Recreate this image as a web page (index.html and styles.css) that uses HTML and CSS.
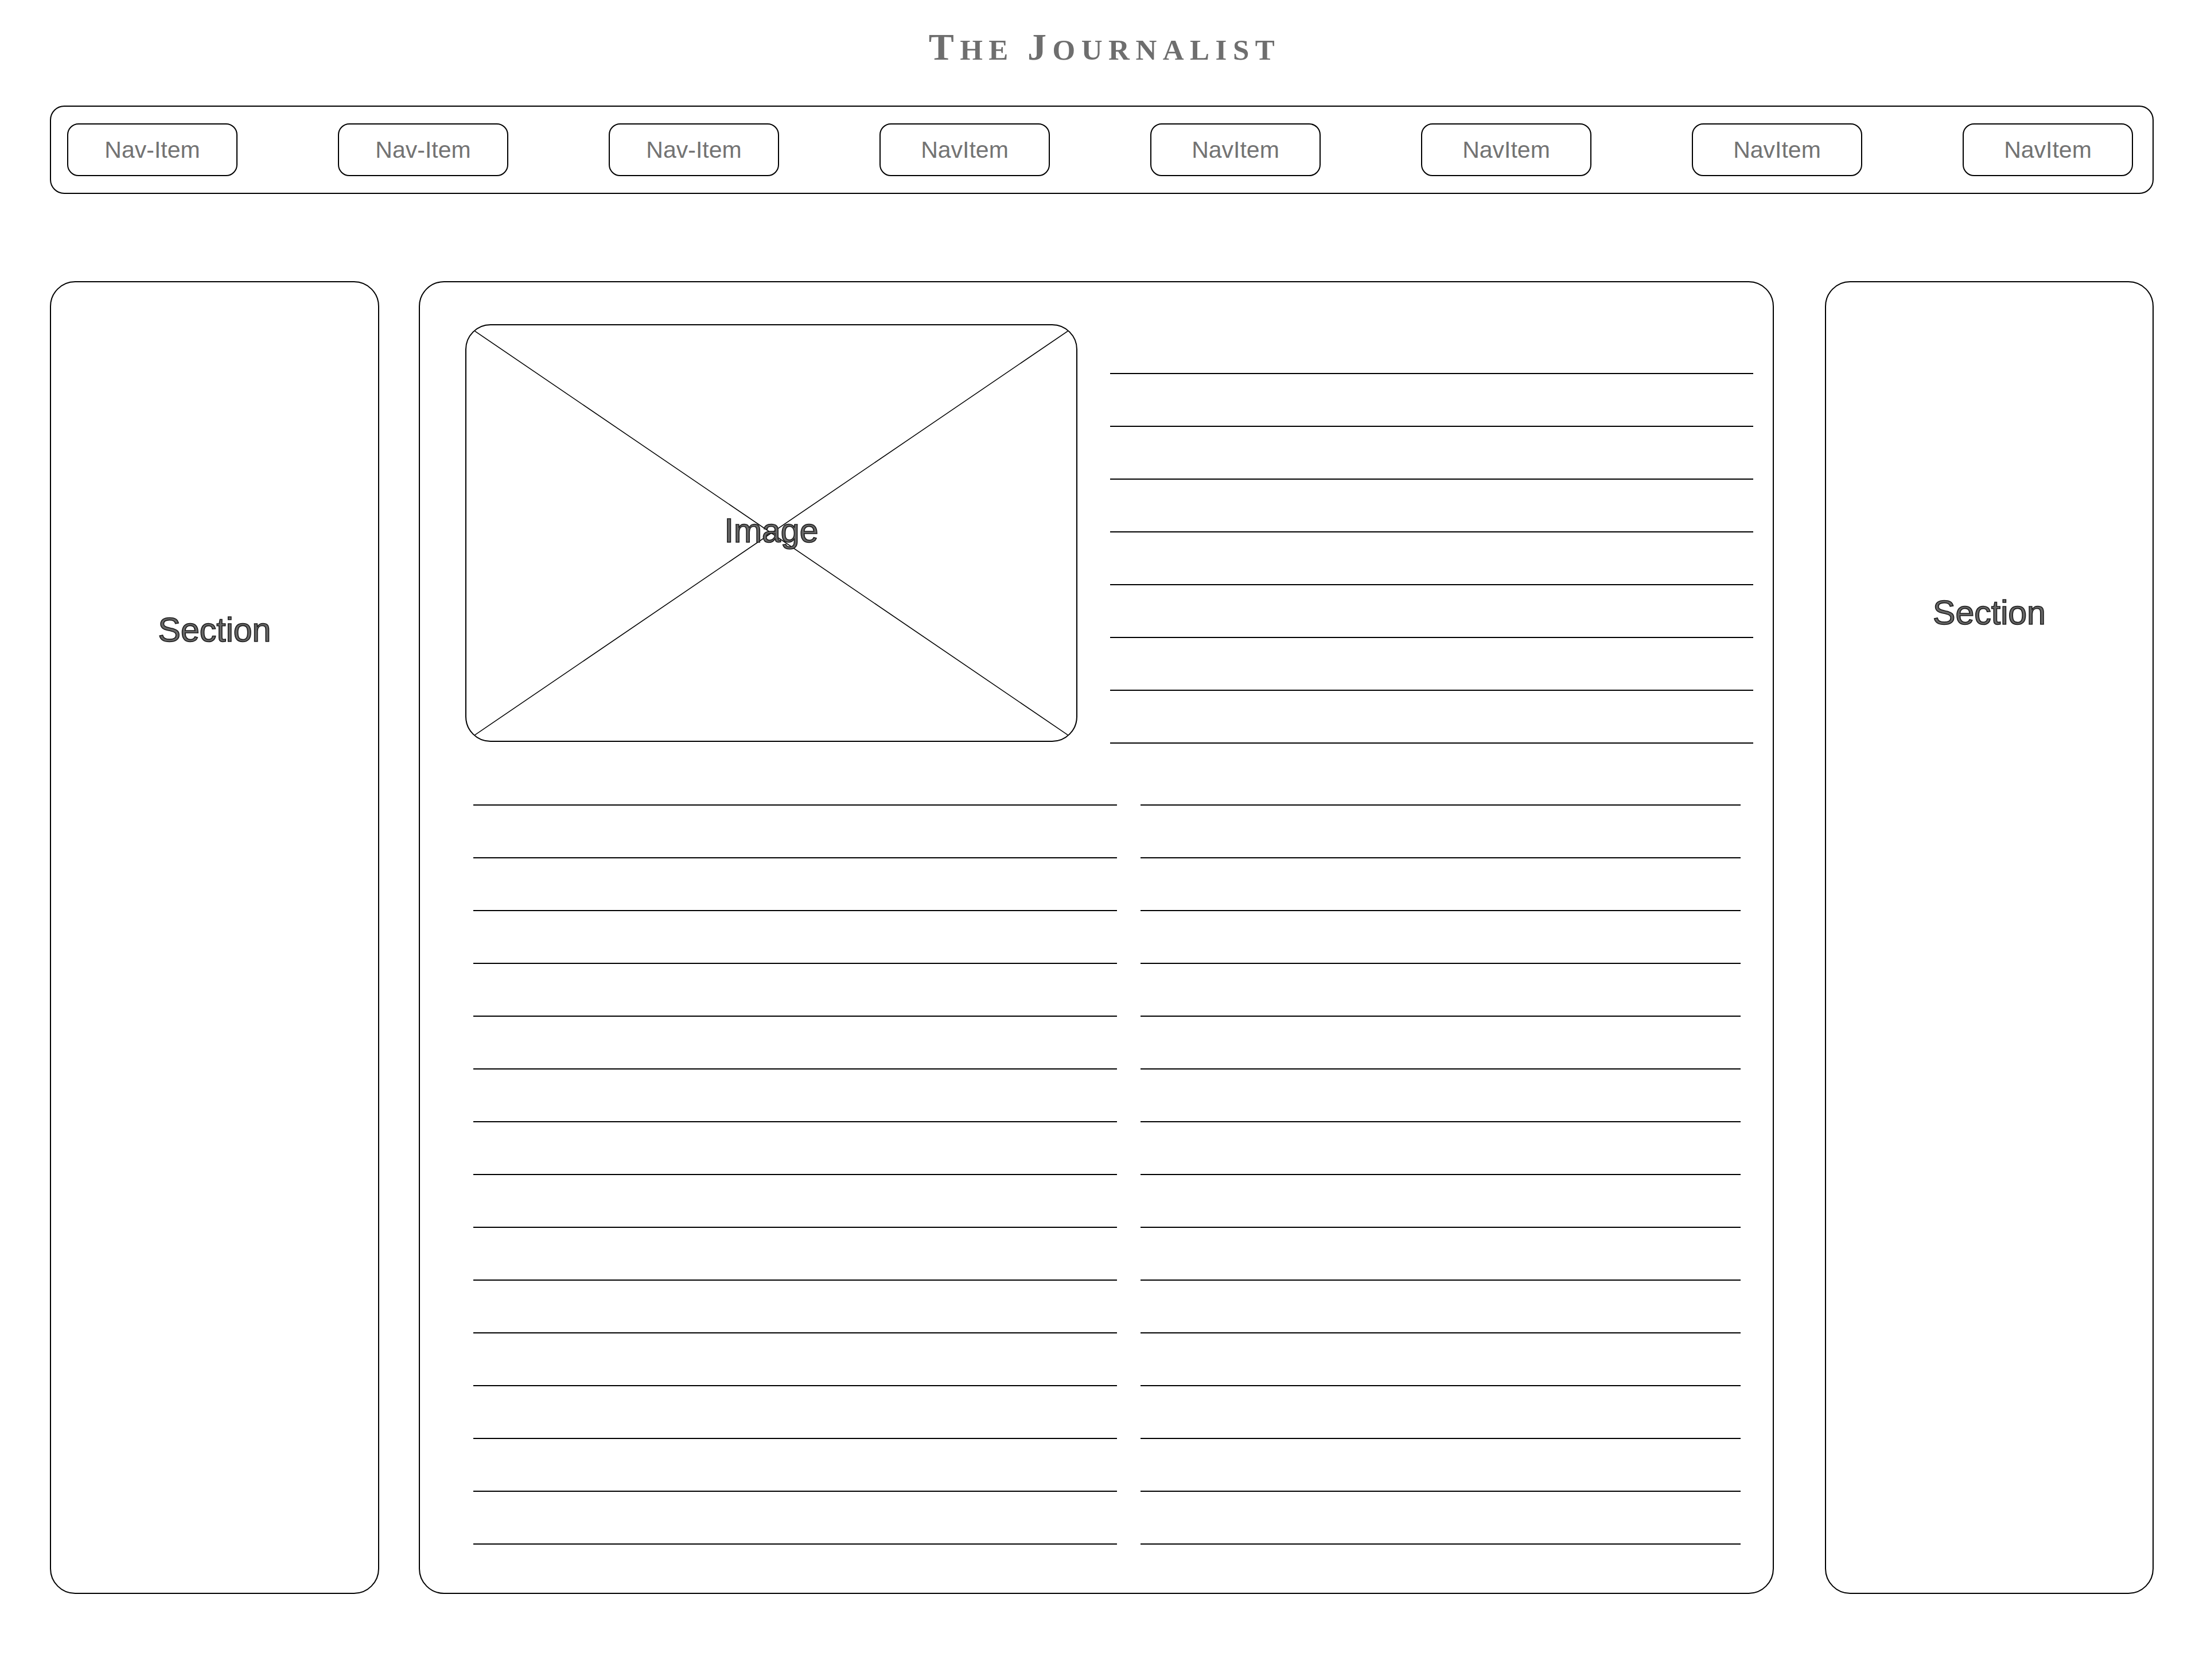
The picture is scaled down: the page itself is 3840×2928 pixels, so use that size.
FILE: index.html
```html
<!DOCTYPE html>
<html lang="en">
<head>
<meta charset="utf-8">
<title>The Journalist – wireframe</title>
<link rel="stylesheet" href="styles.css">
</head>
<body>
<div class="page">
  <h1 class="title"><span class="big">T</span>he <span class="big">J</span>ournalist</h1>

  <nav class="nav">
    <a class="nav-item">Nav-Item</a>
    <a class="nav-item">Nav-Item</a>
    <a class="nav-item">Nav-Item</a>
    <a class="nav-item">NavItem</a>
    <a class="nav-item">NavItem</a>
    <a class="nav-item">NavItem</a>
    <a class="nav-item">NavItem</a>
    <a class="nav-item">NavItem</a>
  </nav>

  <main class="main">
    <aside class="section section-left"><span class="label">Section</span></aside>

    <article class="content">
      <div class="top-row">
        <div class="image">
          <svg class="cross" viewBox="0 0 100 100" preserveAspectRatio="none" aria-hidden="true">
            <line x1="0" y1="0" x2="100" y2="100" vector-effect="non-scaling-stroke"/>
            <line x1="100" y1="0" x2="0" y2="100" vector-effect="non-scaling-stroke"/>
          </svg>
          <span class="label image-label">Image</span>
        </div>
        <div class="lines lines-top">
          <span class="line"></span><span class="line"></span><span class="line"></span><span class="line"></span>
          <span class="line"></span><span class="line"></span><span class="line"></span><span class="line"></span>
        </div>
      </div>

      <div class="columns">
        <div class="lines col-left">
          <span class="line"></span><span class="line"></span><span class="line"></span><span class="line"></span><span class="line"></span>
          <span class="line"></span><span class="line"></span><span class="line"></span><span class="line"></span><span class="line"></span>
          <span class="line"></span><span class="line"></span><span class="line"></span><span class="line"></span><span class="line"></span>
        </div>
        <div class="lines col-right">
          <span class="line"></span><span class="line"></span><span class="line"></span><span class="line"></span><span class="line"></span>
          <span class="line"></span><span class="line"></span><span class="line"></span><span class="line"></span><span class="line"></span>
          <span class="line"></span><span class="line"></span><span class="line"></span><span class="line"></span><span class="line"></span>
        </div>
      </div>
    </article>

    <aside class="section section-right"><span class="label">Section</span></aside>
  </main>
</div>
</body>
</html>
```

FILE: styles.css
```css
* {
  box-sizing: border-box;
}

html, body {
  margin: 0;
  padding: 0;
  background: #ffffff;
}

body {
  width: 3840px;
  min-height: 2928px;
  font-family: "Liberation Sans", Arial, sans-serif;
}

.page {
  padding: 0 86px 0 87px;
}

/* ---------- Title ---------- */
.title {
  margin: 50px 0 0;
  text-align: center;
  font-family: "Liberation Serif", "DejaVu Serif", serif;
  font-weight: bold;
  font-size: 51px;
  line-height: 64px;
  letter-spacing: 10.5px;
  text-transform: uppercase;
  color: #6e6e6e;
  padding-left: 10px;
}

.title .big {
  font-size: 66px;
}

/* ---------- Navigation ---------- */
.nav {
  margin-top: 65px;
  height: 154px;
  border: 2px solid #000;
  border-radius: 25px;
  display: flex;
  align-items: center;
  justify-content: space-between;
  padding: 0 34px 0 28px;
}

.nav-item {
  width: 297px;
  height: 92px;
  border: 2px solid #000;
  border-radius: 20px;
  display: flex;
  align-items: center;
  justify-content: center;
  font-size: 41px;
  color: #737373;
  text-decoration: none;
}

/* ---------- Main area ---------- */
.main {
  margin-top: 152px;
  height: 2288px;
  display: flex;
  align-items: stretch;
}

.section {
  border: 2px solid #000;
  border-radius: 44px;
  display: flex;
  flex-direction: column;
  align-items: center;
}

.section-left {
  width: 574px;
  margin-right: 69px;
  padding-top: 577px;
}

.section-right {
  width: 573px;
  margin-left: 89px;
  padding-top: 547px;
}

.label {
  font-family: "Liberation Sans", Arial, sans-serif;
  font-size: 59px;
  line-height: 1;
  color: #666666;
  -webkit-text-stroke: 1.6px #1a1a1a;
}

/* ---------- Content ---------- */
.content {
  width: 2362px;
  border: 2px solid #000;
  border-radius: 44px;
  padding: 73px 34px 0 79px;
}

.top-row {
  display: flex;
  align-items: flex-start;
}

.image {
  position: relative;
  width: 1067px;
  height: 728px;
  flex: none;
  border: 2px solid #000;
  border-radius: 44px;
  overflow: hidden;
  display: flex;
  align-items: center;
  justify-content: center;
  padding-bottom: 8px;
}

.cross {
  position: absolute;
  inset: 0;
  width: 100%;
  height: 100%;
}

.cross line {
  stroke: #000;
  stroke-width: 1.5;
}

.image-label {
  position: relative;
}

.lines {
  display: flex;
  flex-direction: column;
  gap: 90px;
}

.line {
  display: block;
  height: 2px;
  background: #000;
}

.lines-top {
  width: 1121px;
  margin-left: 57px;
  padding-top: 85px;
}

.columns {
  margin: 106px 22px 0 14px;
  display: flex;
  gap: 41px;
}

.col-left {
  width: 1122px;
}

.col-right {
  width: 1046px;
}
```
